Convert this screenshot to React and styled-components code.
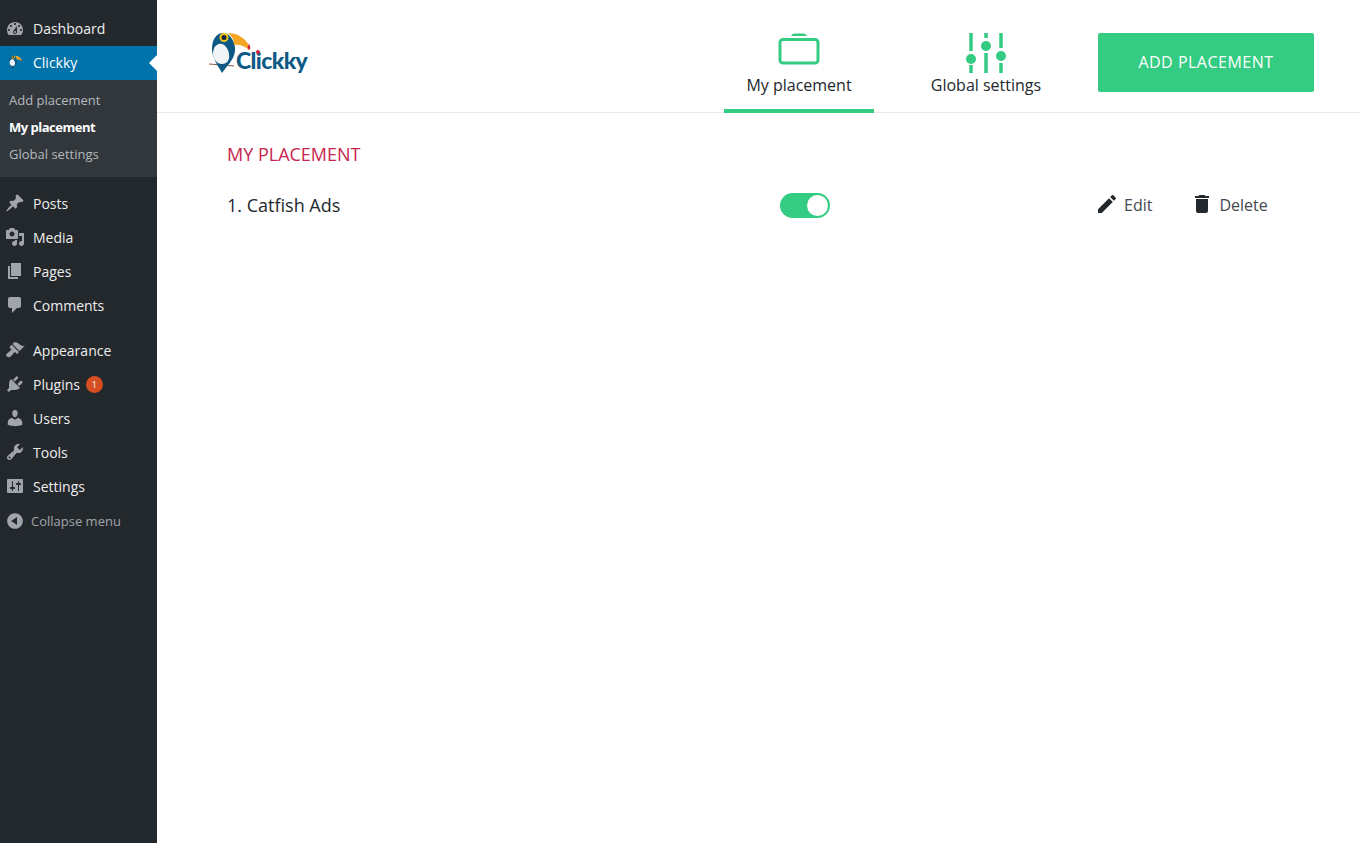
import styled, { createGlobalStyle } from "styled-components";
import { MdEdit, MdDelete } from "react-icons/md";

const GlobalStyle = createGlobalStyle`
  html, body {
    margin: 0;
    padding: 0;
    background: #fff;
    font-family: "Open Sans", "Liberation Sans", sans-serif;
  }
  * {
    box-sizing: border-box;
  }
`;

const dashicons = {
  dashboard:
    "M3.76 16h12.48c1.1-1.37 1.76-3.11 1.76-5 0-4.42-3.58-8-8-8s-8 3.58-8 8c0 1.89.66 3.63 1.76 5zM10 4c.55 0 1 .45 1 1s-.45 1-1 1-1-.45-1-1 .45-1 1-1zM6 6c.55 0 1 .45 1 1s-.45 1-1 1-1-.45-1-1 .45-1 1-1zm8 0c.55 0 1 .45 1 1s-.45 1-1 1-1-.45-1-1 .45-1 1-1zm-5.37 5.55L12 7v6c0 1.1-.9 2-2 2s-2-.9-2-2c0-.57.24-1.08.63-1.45zM4 10c.55 0 1 .45 1 1s-.45 1-1 1-1-.45-1-1 .45-1 1-1zm12 0c.55 0 1 .45 1 1s-.45 1-1 1-1-.45-1-1 .45-1 1-1zm-5 3c0-.55-.45-1-1-1s-1 .45-1 1 .45 1 1 1 1-.45 1-1z",
  posts:
    "M10.44 3.02l1.82-1.82 6.36 6.35-1.83 1.82c-1.05-.68-2.48-.57-3.41.36l-.75.75c-.92.93-1.04 2.35-.35 3.41l-1.83 1.82-2.41-2.41-2.8 2.79c-.42.42-3.38 2.71-3.8 2.29s1.86-3.39 2.28-3.81l2.79-2.79L4.1 9.36l1.83-1.82c1.05.69 2.48.57 3.4-.36l.75-.75c.93-.92 1.05-2.35.36-3.41z",
  media:
    "M13 11V4c0-.55-.45-1-1-1h-1.67L9 1H5L3.67 3H2c-.55 0-1 .45-1 1v7c0 .55.45 1 1 1h10c.55 0 1-.45 1-1zM7 4.5c1.38 0 2.5 1.12 2.5 2.5S8.38 9.5 7 9.5 4.5 8.38 4.5 7 5.62 4.5 7 4.5zM14 6h5v10.5c0 1.38-1.12 2.5-2.5 2.5S14 17.88 14 16.5s1.12-2.5 2.5-2.5c.17 0 .34.02.5.05V9h-3V6zm-4 8.05V13h2v3.5c0 1.38-1.12 2.5-2.5 2.5S7 17.88 7 16.5 8.12 14 9.5 14c.17 0 .34.02.5.05z",
  pages: "M6 15V2h10v13H6zm-1 1h8v2H3V5h2v11z",
  comments:
    "M5 2h9c1.1 0 2 .9 2 2v7c0 1.1-.9 2-2 2h-2l-5 5v-5H5c-1.1 0-2-.9-2-2V4c0-1.1.9-2 2-2z",
  appearance:
    "M14.48 11.06L7.41 3.99l1.5-1.5c.5-.56 2.3-.47 3.51.32 1.21.8 1.43 1.28 2.91 2.1 1.18.64 2.45 1.26 4.45.85zm-.71.71L6.7 4.7 4.93 6.47c-.39.39-.39 1.02 0 1.41l1.06 1.06c.39.39.39 1.03 0 1.42-.6.6-1.43 1.11-2.21 1.69-.35.26-.7.53-1.01.84C1.43 13.23.4 14.89 1.98 16.47c1.59 1.59 3.25.55 4.59-.79.31-.31.58-.66.84-1.01.58-.78 1.09-1.61 1.69-2.21.39-.39 1.03-.39 1.42 0l1.06 1.06c.39.39 1.02.39 1.41 0z",
  plugins:
    "M13.11 4.36L9.87 7.6 8 5.73l3.24-3.24c.35-.34 1.05-.2 1.56.32.52.51.66 1.21.31 1.55zm-8 1.77l.91-1.12 9.01 9.01-1.19.84c-.71.71-2.63 1.16-3.82 1.16H6.14L4.9 17.26c-.59.59-1.54.59-2.12 0-.59-.58-.59-1.53 0-2.12l1.24-1.24v-3.88c0-1.13.4-3.19 1.09-3.89zm7.26 3.97l3.24-3.24c.34-.35 1.04-.21 1.55.31.52.51.66 1.21.31 1.55l-3.24 3.25z",
  users:
    "M10 9.25c-2.27 0-2.73-3.44-2.73-3.44C7 4.02 7.82 2 9.97 2c2.16 0 2.98 2.02 2.71 3.81 0 0-.41 3.44-2.68 3.44zm0 2.57L12.72 10c2.39 0 4.52 2.33 4.52 4.53v2.49s-3.65 1.13-7.24 1.13c-3.65 0-7.24-1.13-7.24-1.13v-2.49c0-2.25 1.94-4.48 4.47-4.48z",
  tools:
    "M16.68 9.77c-1.34 1.34-3.3 1.67-4.95.99l-5.41 6.52c-.99.99-2.59.99-3.58 0s-.99-2.59 0-3.57l6.52-5.42c-.68-1.65-.35-3.61.99-4.95 1.28-1.28 3.12-1.62 4.72-1.06l-2.89 2.89 2.82 2.82 2.86-2.87c.53 1.58.18 3.39-1.08 4.65zM3.81 16.21c.4.39 1.04.39 1.43 0 .4-.4.4-1.04 0-1.43-.39-.4-1.03-.4-1.43 0-.39.39-.39 1.03 0 1.43z",
  settings:
    "M18 16V4c0-.55-.45-1-1-1H3c-.55 0-1 .45-1 1v12c0 .55.45 1 1 1h14c.55 0 1-.45 1-1zM8 11h1c.55 0 1 .45 1 1s-.45 1-1 1H8v1.5c0 .28-.22.5-.5.5s-.5-.22-.5-.5V13H6c-.55 0-1-.45-1-1s.45-1 1-1h1V5.5c0-.28.22-.5.5-.5s.5.22.5.5V11zm5-2h-1c-.55 0-1-.45-1-1s.45-1 1-1h1V5.5c0-.28.22-.5.5-.5s.5.22.5.5V7h1c.55 0 1 .45 1 1s-.45 1-1 1h-1v5.5c0 .28-.22.5-.5.5s-.5-.22-.5-.5V9z",
  collapse:
    "M10 2.16c4.33 0 7.84 3.51 7.84 7.84s-3.51 7.84-7.84 7.84S2.16 14.33 2.16 10 5.71 2.16 10 2.16zm2 11.72V6.12L6.18 9.97z",
};

const Dashicon = ({ name }) => (
  <MenuIcon viewBox="0 0 20 20">
    <path d={dashicons[name]} />
  </MenuIcon>
);

const Toucan = ({ width }) => (
  <svg width={width} height={(width * 44) / 45} viewBox="0 0 45 44">
    <path d="M1 33l25 2" stroke="#8a5a44" strokeWidth="1" />
    <path
      d="M15 2C8 2 4 9 4 18c0 9 6 17 10 24 4-6 12-13 13-22 .5-5-1-9-3-12C22 4 19 2 15 2z"
      fill="#0e5a85"
    />
    <path
      d="M11 13c-4 1-6 5-6 10 0 5 4 10 9 10 5 0 8-4 7-10-1-6-5-11-10-10z"
      fill="#f2f5f7"
    />
    <path
      d="M20 2c8 0 18 4 22 15l-1 2c-4-4-10-6-15-5 0-5-2-9-6-12z"
      fill="#f5a623"
    />
    <path d="M41 12.500l1.500 4.500-1.500 2-1.500-2.500z" fill="#d0213b" />
    <circle cx="16" cy="6.500" r="4.500" fill="#f5c518" />
    <circle cx="16" cy="6.500" r="2.500" fill="#12283a" />
  </svg>
);

const App = () => {
  return (
    <>
      <GlobalStyle />
      <Page>
        <Sidebar>
          <TopItem>
            <Dashicon name="dashboard" />
            Dashboard
          </TopItem>
          <ActiveItem>
            <ActiveLogo>
              <Toucan width={15} />
            </ActiveLogo>
            Clickky
          </ActiveItem>
          <Submenu>
            <SubItem>Add placement</SubItem>
            <SubItem $current>My placement</SubItem>
            <SubItem>Global settings</SubItem>
          </Submenu>
          <MenuGroup>
            <MenuItem>
              <Dashicon name="posts" />
              Posts
            </MenuItem>
            <MenuItem>
              <Dashicon name="media" />
              Media
            </MenuItem>
            <MenuItem>
              <Dashicon name="pages" />
              Pages
            </MenuItem>
            <MenuItem>
              <Dashicon name="comments" />
              Comments
            </MenuItem>
          </MenuGroup>
          <MenuGroup>
            <MenuItem>
              <Dashicon name="appearance" />
              Appearance
            </MenuItem>
            <MenuItem>
              <Dashicon name="plugins" />
              Plugins
              <Badge>1</Badge>
            </MenuItem>
            <MenuItem>
              <Dashicon name="users" />
              Users
            </MenuItem>
            <MenuItem>
              <Dashicon name="tools" />
              Tools
            </MenuItem>
            <MenuItem>
              <Dashicon name="settings" />
              Settings
            </MenuItem>
            <CollapseItem>
              <Dashicon name="collapse" />
              Collapse menu
            </CollapseItem>
          </MenuGroup>
        </Sidebar>
        <Main>
          <Header>
            <Logo>
              <Toucan width={45} />
              <LogoText>Clickky</LogoText>
            </Logo>
            <Tabs>
              <Tab $active>
                <TabIcon>
                  <svg width="42" height="33" viewBox="0 0 42 33">
                    <path d="M13 3q1-2.500 3-2.500h10q2 0 3 2.500z" fill="#34cb82" />
                    <rect
                      x="2"
                      y="6.500"
                      width="38"
                      height="23.500"
                      rx="3"
                      fill="none"
                      stroke="#34cb82"
                      strokeWidth="3"
                    />
                  </svg>
                </TabIcon>
                My placement
              </Tab>
              <Tab>
                <TabIcon>
                  <svg width="42" height="40" viewBox="0 0 42 40">
                    <path
                      d="M6 0v18M6 32v8M21 0v5M21 20v20M36 0v15M36 30v10"
                      stroke="#34cb82"
                      strokeWidth="3.500"
                    />
                    <circle cx="6" cy="26" r="5" fill="#34cb82" />
                    <circle cx="21" cy="13" r="5" fill="#34cb82" />
                    <circle cx="36" cy="23" r="5" fill="#34cb82" />
                  </svg>
                </TabIcon>
                Global settings
              </Tab>
            </Tabs>
            <AddButton>ADD PLACEMENT</AddButton>
          </Header>
          <Content>
            <Title>MY PLACEMENT</Title>
            <Row>
              <RowName>1. Catfish Ads</RowName>
              <Toggle />
              <Actions>
                <Action>
                  <MdEdit size={24} />
                  Edit
                </Action>
                <Action>
                  <MdDelete size={24} />
                  Delete
                </Action>
              </Actions>
            </Row>
          </Content>
        </Main>
      </Page>
    </>
  );
};

const Page = styled.div`
  display: flex;
  min-height: 100vh;
`;

const Sidebar = styled.aside`
  width: 157px;
  flex-shrink: 0;
  background: #23282d;
  padding-top: 11px;
`;

const MenuItem = styled.div`
  display: flex;
  align-items: center;
  height: 34px;
  padding-left: 5px;
  font-size: 14px;
  color: #eee;
`;

const TopItem = styled(MenuItem)`
  height: 35px;
`;

const MenuIcon = styled.svg`
  width: 20px;
  height: 20px;
  margin-right: 8px;
  flex-shrink: 0;
  fill: #a0a5aa;
`;

const ActiveItem = styled(MenuItem)`
  position: relative;
  padding-bottom: 2px;
  background: #0073aa;
  color: #fff;

  &::after {
    content: "";
    position: absolute;
    right: 0;
    top: 9px;
    border: 8px solid transparent;
    border-right-color: #fff;
  }
`;

const ActiveLogo = styled.span`
  display: flex;
  justify-content: center;
  width: 20px;
  margin-right: 8px;
`;

const Submenu = styled.div`
  display: flex;
  flex-direction: column;
  justify-content: center;
  height: 97px;
  padding-bottom: 2px;
  background: #32373c;
`;

const SubItem = styled.div`
  height: 27px;
  line-height: 27px;
  padding-left: 9px;
  font-size: 13px;
  font-weight: ${(p) => (p.$current ? 700 : 400)};
  letter-spacing: ${(p) => (p.$current ? "-0.5px" : "0")};
  color: ${(p) => (p.$current ? "#fff" : "#b4b9be")};
`;

const MenuGroup = styled.div`
  margin-top: 9px;

  & + & {
    margin-top: 11px;
  }
`;

const Badge = styled.span`
  width: 17px;
  height: 17px;
  margin-left: 6px;
  border-radius: 50%;
  background: #d54e21;
  color: #fff;
  font-size: 9px;
  line-height: 17px;
  text-align: center;
`;

const CollapseItem = styled(MenuItem)`
  margin-top: 1px;
  font-size: 13px;
  color: #a0a5aa;

  ${MenuIcon} {
    margin-right: 6px;
  }
`;

const Main = styled.main`
  flex: 1;
  min-width: 0;
`;

const Header = styled.header`
  display: flex;
  height: 113px;
  padding: 0 46px 0 51px;
  border-bottom: 1px solid #e8e8e8;
`;

const Logo = styled.div`
  display: flex;
  align-items: flex-start;
  width: 516px;
  padding-top: 31px;
`;

const LogoText = styled.span`
  position: relative;
  margin-top: 12px;
  margin-left: -17px;
  font-family: Lato, "Open Sans", sans-serif;
  font-size: 23px;
  font-weight: 900;
  line-height: 34px;
  letter-spacing: -0.6px;
  color: #0e5a85;

  &::after {
    content: "";
    position: absolute;
    left: 20px;
    top: 7px;
    width: 4px;
    height: 4px;
    border-radius: 50%;
    background: #d0213b;
  }
`;

const Tabs = styled.nav`
  display: flex;
  gap: 37px;
  height: 113px;
`;

const Tab = styled.div`
  display: flex;
  flex-direction: column;
  align-items: center;
  width: 150px;
  height: 113px;
  padding-top: 33px;
  border-bottom: 4px solid ${(p) => (p.$active ? "#34cb82" : "transparent")};
  font-size: 16px;
  line-height: 22px;
  color: #23282d;
`;

const TabIcon = styled.span`
  display: block;
  height: 41px;
  line-height: 0;
`;

const AddButton = styled.button`
  width: 216px;
  height: 59px;
  margin-top: 33px;
  margin-left: 37px;
  padding: 0 0 2px;
  border: 0;
  border-radius: 2px;
  background: #34cb82;
  color: #fff;
  font-family: inherit;
  font-size: 16px;
  font-weight: 500;
  letter-spacing: 0.5px;
`;

const Content = styled.section`
  padding: 29px 0 0 70px;
`;

const Title = styled.h2`
  margin: 0;
  font-size: 18px;
  font-weight: 500;
  line-height: 24px;
  color: #c7254e;
`;

const Row = styled.div`
  display: flex;
  align-items: center;
  height: 25px;
  margin-top: 27px;
`;

const RowName = styled.div`
  width: 553px;
  padding-bottom: 2px;
  font-size: 18px;
  font-weight: 500;
  color: #23282d;
`;

const Toggle = styled.div`
  position: relative;
  width: 50px;
  height: 25px;
  border-radius: 13px;
  background: #34cb82;

  &::after {
    content: "";
    position: absolute;
    top: 2px;
    right: 2px;
    width: 21px;
    height: 21px;
    border-radius: 50%;
    background: #fff;
  }
`;

const Actions = styled.div`
  display: flex;
  gap: 38px;
  margin-left: 265px;
`;

const Action = styled.div`
  display: flex;
  align-items: center;
  gap: 5px;
  padding-bottom: 2px;
  font-size: 16px;
  color: #44484f;

  svg {
    color: #23282d;
    margin-bottom: 2px;
  }
`;

export default App;
